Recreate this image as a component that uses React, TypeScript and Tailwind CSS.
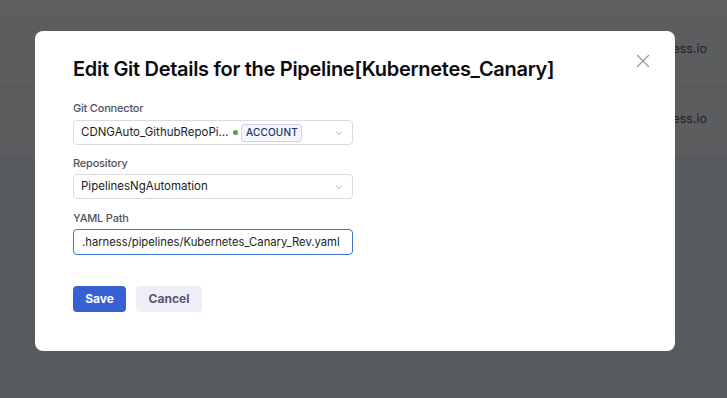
import React from "react";

function Chevron() {
  return (
    <svg width="10" height="10" viewBox="0 0 10 10" fill="none">
      <path d="M2.5 4 L5 6.5 L7.5 4" stroke="#b0b1c4" strokeWidth="1" strokeLinecap="round" strokeLinejoin="round" />
    </svg>
  );
}

export default function App() {
  return (
    <div
      className="relative h-[398px] w-[727px] overflow-hidden bg-[#585b5e]"
      style={{ fontFamily: "Inter, 'Noto Sans', sans-serif" }}
    >
      {/* background page (dimmed) */}
      <div className="flex flex-col">
        <div className="h-[18px] border-b border-[#55575a] bg-[#5d5e60]" />
        <div className="flex h-[69px] items-center justify-end border-b border-[#55575a] bg-[#5c5d5f] pb-[5px] pr-[20px]">
          <span className="text-[12.5px] text-[#1e1f22]">automation@harness.io</span>
        </div>
        <div className="flex h-[70px] items-center justify-end border-b border-[#55575a] bg-[#5c5d5f] pb-[5px] pr-[20px]">
          <span className="text-[12.5px] text-[#1e1f22]">automation@harness.io</span>
        </div>
      </div>

      {/* modal */}
      <div className="absolute left-[35px] top-[31px] flex h-[320px] w-[640px] flex-col rounded-lg bg-white pl-[38px] pt-[24px]">
        <button className="absolute right-[24px] top-[22px] flex h-[16px] w-[16px] items-center justify-center">
          <svg width="14" height="14" viewBox="0 0 14 14" fill="none">
            <path d="M1.5 1.5 L12.5 12.5 M12.5 1.5 L1.5 12.5" stroke="#9293ab" strokeWidth="1.2" strokeLinecap="round" />
          </svg>
        </button>
        <h1 className="h-[28px] text-[20px] font-semibold leading-[28px] tracking-[-0.3px] text-[#0b0b0d]">
          Edit Git Details for the Pipeline[Kubernetes_Canary]
        </h1>

        <label className="mt-[17px] h-[16px] text-[11px] font-medium leading-[16px] tracking-[-0.2px] text-[#4f5162]">Git Connector</label>
        <div className="mt-[4px] flex h-[25px] w-[280px] items-center rounded border border-[#d9dae5] pl-[7px] pr-[8px]">
          <span className="text-[11.5px] text-[#1c1c28]">CDNGAuto_GithubRepoPi…</span>
          <span className="ml-[5px] h-[5px] w-[5px] rounded-full bg-[#42ab45]" />
          <span className="ml-[3px] flex h-[18px] w-[61px] items-center justify-center rounded-[3px] border border-[#cdd3e8] bg-[#f3f5fb] text-[10px] font-medium tracking-[0.2px] text-[#22346b]">
            ACCOUNT
          </span>
          <span className="ml-auto flex">
            <Chevron />
          </span>
        </div>

        <label className="mt-[10px] h-[16px] text-[11px] font-medium leading-[16px] tracking-[-0.2px] text-[#4f5162]">Repository</label>
        <div className="mt-[3px] flex h-[25px] w-[280px] items-center rounded border border-[#d9dae5] pl-[7px] pr-[8px]">
          <span className="text-[11.5px] text-[#1c1c28]">PipelinesNgAutomation</span>
          <span className="ml-auto flex">
            <Chevron />
          </span>
        </div>

        <label className="mt-[11px] h-[16px] text-[11px] font-medium leading-[16px] tracking-[-0.2px] text-[#4f5162]">YAML Path</label>
        <div className="mt-[3px] flex h-[26px] w-[280px] items-center rounded border border-[#3c6fd8] pl-[8px]">
          <span className="text-[11.25px] text-[#1c1c28]">.harness/pipelines/Kubernetes_Canary_Rev.yaml</span>
        </div>

        <div className="mt-[31px] flex gap-[10px]">
          <button className="flex h-[26px] w-[53px] items-center justify-center rounded bg-[#3761d3] text-[12px] font-bold text-white">
            Save
          </button>
          <button className="flex h-[26px] w-[66px] items-center justify-center rounded bg-[#f0eff8] text-[12px] font-bold text-[#555770]">
            Cancel
          </button>
        </div>
      </div>
    </div>
  );
}
